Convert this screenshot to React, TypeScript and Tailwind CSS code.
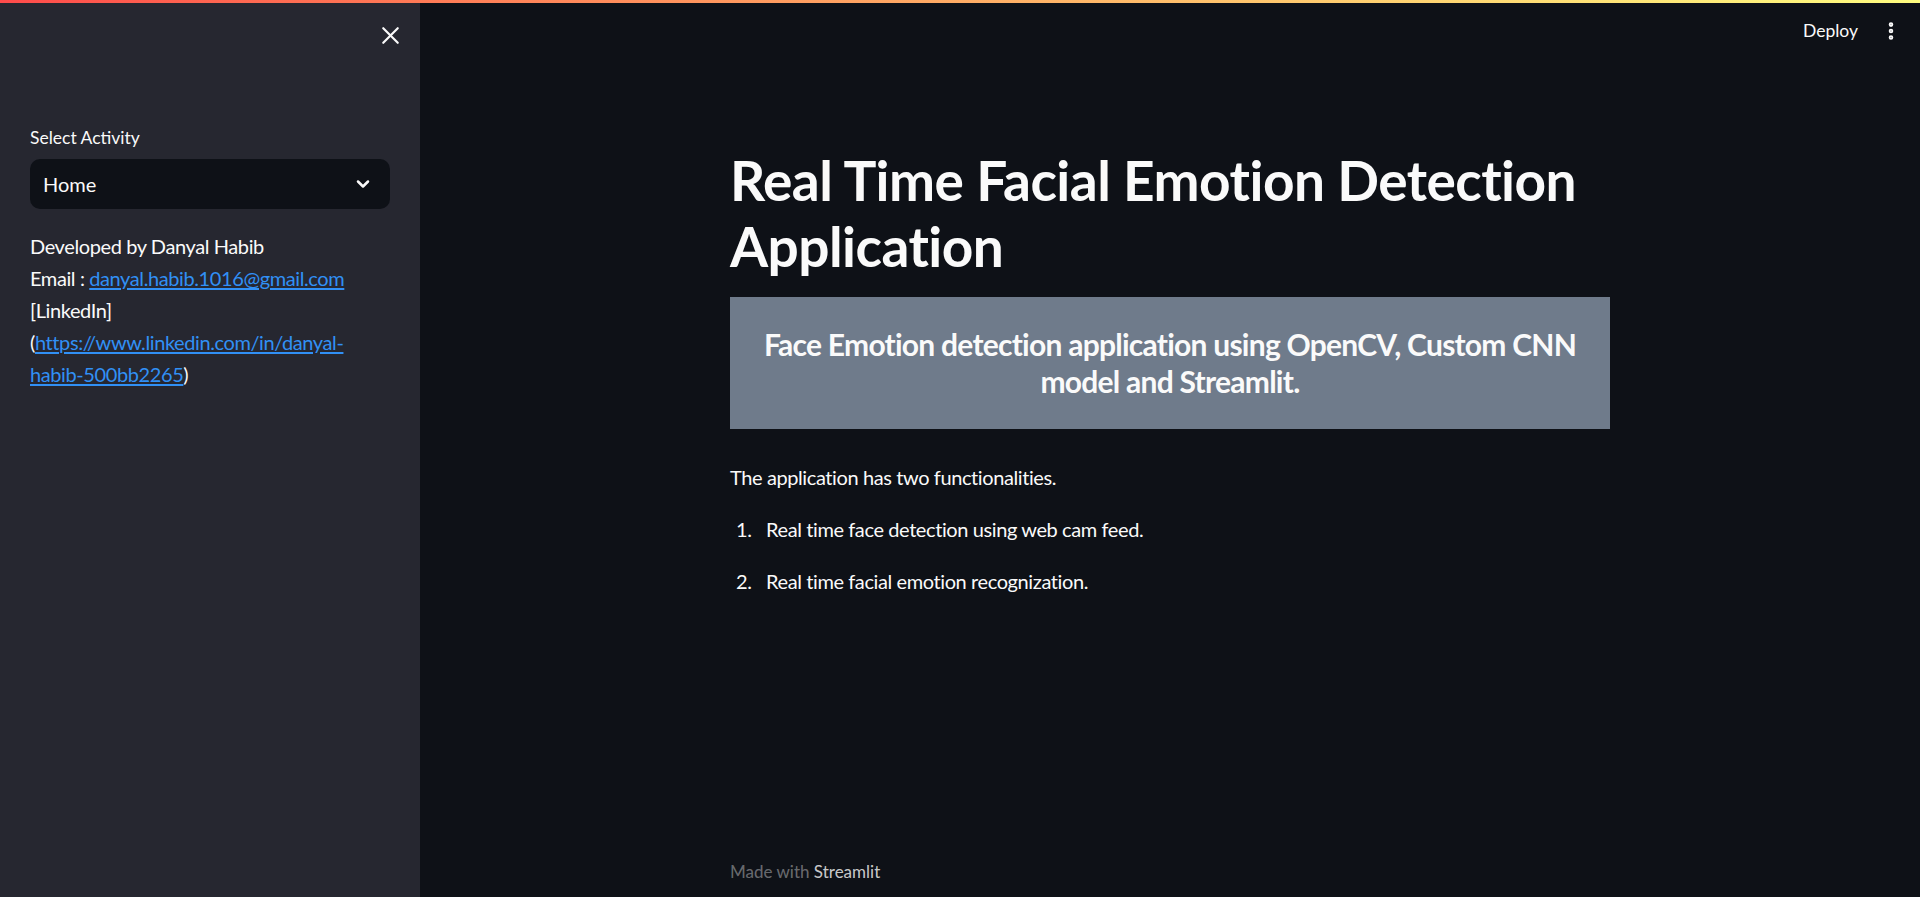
import React from "react";
import { X, ChevronDown, EllipsisVertical } from "lucide-react";

const font = { fontFamily: '"Lato", "Noto Sans", sans-serif' };

function Sidebar() {
  return (
    <aside className="w-[420px] shrink-0 bg-[#262730] text-[#fafafa] flex flex-col px-[30px]">
      <div className="flex justify-end h-[70px] pt-[20px] -mr-[15px]">
        <button className="h-[30px] w-[30px] flex items-center justify-center text-[#fafafa]">
          <X size={29} strokeWidth={1.8} />
        </button>
      </div>
      <label className="text-[17.5px] leading-[24px] mt-[56px]">Select Activity</label>
      <div className="mt-[9px] h-[50px] w-[360px] rounded-[10px] bg-[#0e1117] flex items-center justify-between pl-[13px] pr-[17px]">
        <span className="text-[20px]">Home</span>
        <ChevronDown size={20} strokeWidth={3} />
      </div>
      <div className="mt-[21px] text-[20px] leading-[32px] tracking-[-0.02em]">
        <p>Developed by Danyal Habib</p>
        <p>
          Email :{" "}
          <a href="#" className="text-[#3190f5] underline underline-offset-2">
            danyal.habib.1016@gmail.com
          </a>
        </p>
        <p>
          [LinkedIn]
          <br />(
          <a href="#" className="text-[#3190f5] underline underline-offset-2">
            https://www.linkedin.com/in/danyal-
            <br />
            habib-500bb2265
          </a>
          )
        </p>
      </div>
    </aside>
  );
}

export default function App() {
  return (
    <div className="relative h-[897px] w-full flex bg-[#0e1117] overflow-hidden" style={font}>
      <div className="absolute top-0 left-0 right-0 h-[3px] bg-gradient-to-r from-[#ff4b4b] to-[#fffd80]" />
      <Sidebar />
      <main className="flex-1 flex flex-col text-[#fafafa]">
        <header className="h-[60px] flex items-start justify-end pt-[19px] pr-[18px] gap-[22px]">
          <span className="text-[17.5px] leading-[24px]">Deploy</span>
          <EllipsisVertical size={22} strokeWidth={3} className="mt-[1px]" />
        </header>
        <div className="w-[880px] mx-auto pt-[87px] flex-1 flex flex-col">
          <h1 className="text-[55px] leading-[66px] font-bold tracking-[-0.01em]">
            Real Time Facial Emotion Detection Application
          </h1>
          <div className="mt-[18px] bg-[#6f7b8b] py-[29px] px-[10px] text-center">
            <h3 className="text-[30px] leading-[37px] font-bold tracking-[-0.025em]">
              Face Emotion detection application using OpenCV, Custom CNN model and Streamlit.
            </h3>
          </div>
          <p className="mt-[32px] text-[20px] leading-[32px] tracking-[-0.02em]">
            The application has two functionalities.
          </p>
          <ol className="mt-[20px] text-[20px] leading-[32px] tracking-[-0.02em] flex flex-col gap-[20px]">
            <li className="flex">
              <span className="w-[36px] pl-[6px]">1.</span>
              <span>Real time face detection using web cam feed.</span>
            </li>
            <li className="flex">
              <span className="w-[36px] pl-[6px]">2.</span>
              <span>Real time facial emotion recognization.</span>
            </li>
          </ol>
          <footer className="mt-auto pb-[15px] text-[17px] leading-[20px]">
            <span className="text-[#fafafa]/40">Made with </span>
            <span className="text-[#fafafa]/80">Streamlit</span>
          </footer>
        </div>
      </main>
    </div>
  );
}
